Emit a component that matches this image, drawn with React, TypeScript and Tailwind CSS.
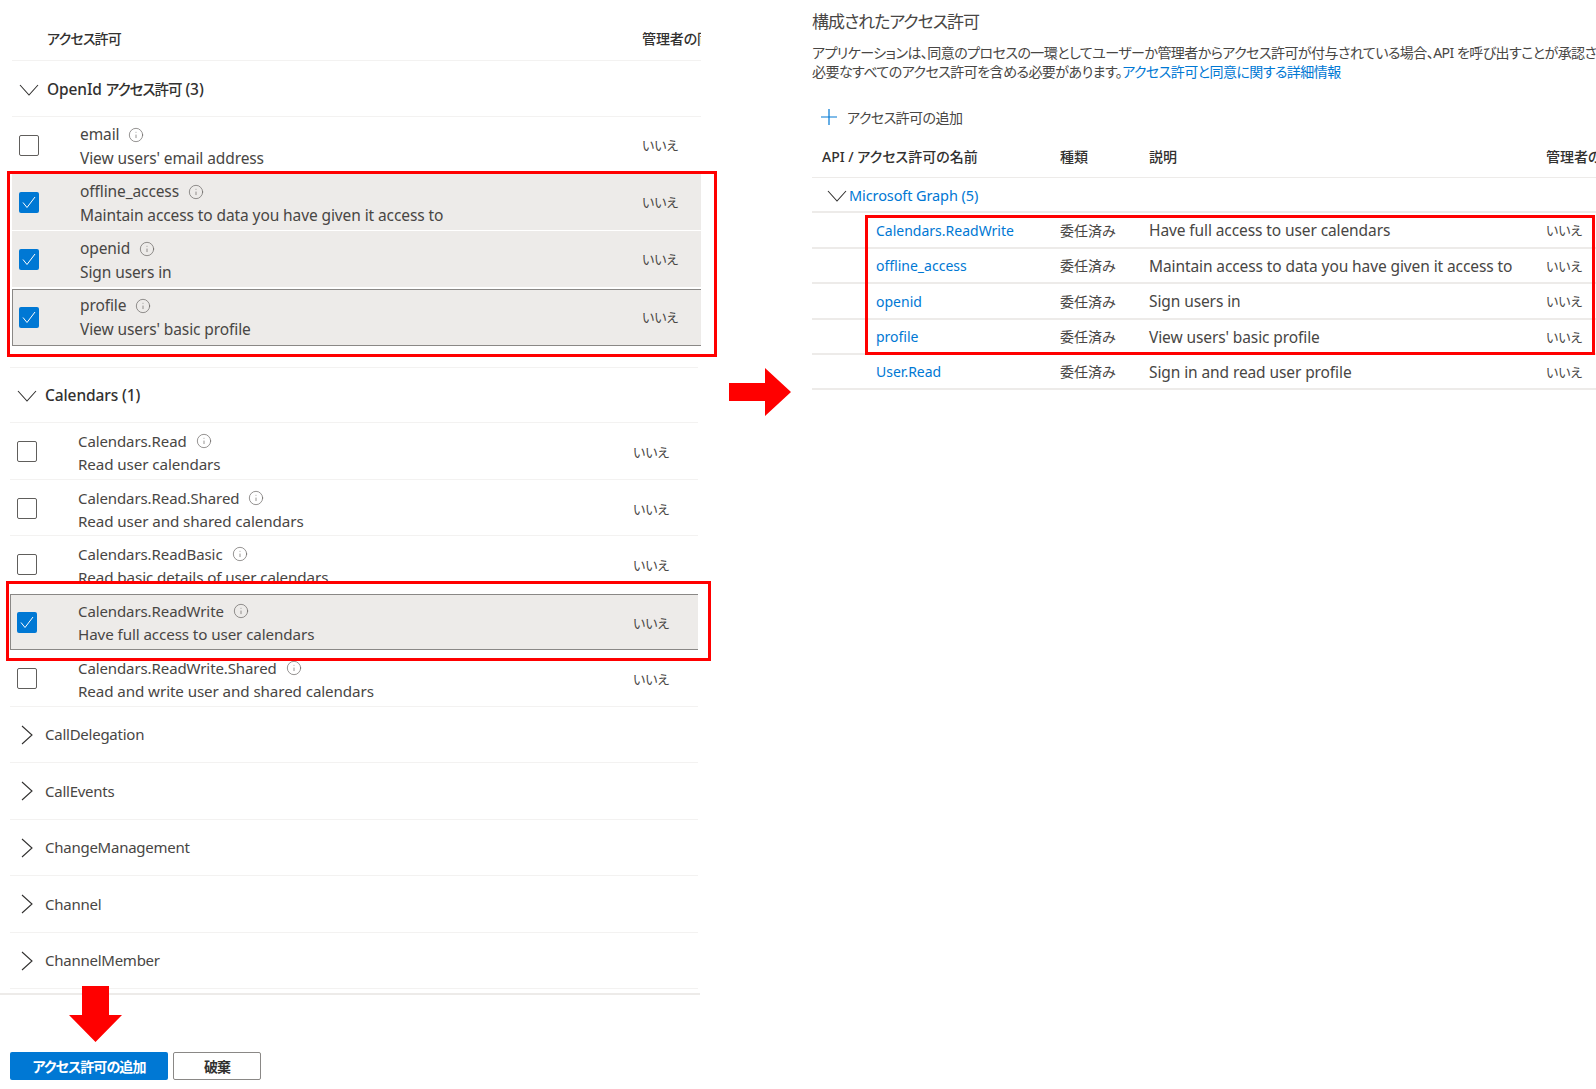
import type { ReactNode } from 'react';
import { Info } from 'lucide-react';

const Chevron = ({ open }: { open: boolean }) =>
  open ? (
    <svg width="20" height="12" viewBox="0 0 20 12" fill="none" stroke="#323130" strokeWidth="1.1">
      <path d="M1 1l9 10 9-10" />
    </svg>
  ) : (
    <svg width="12" height="20" viewBox="0 0 12 20" fill="none" stroke="#323130" strokeWidth="1.1">
      <path d="M1 1l10 9-10 9" />
    </svg>
  );

const Checkbox = ({ checked }: { checked?: boolean }) =>
  checked ? (
    <div className="flex h-[21px] w-[20px] items-center justify-center rounded-[2px] bg-[#0078d4]">
      <svg width="14" height="14" viewBox="0 0 14 14" fill="none" stroke="#fff" strokeWidth="1">
        <path d="M1 7.5l4 5L13 2" />
      </svg>
    </div>
  ) : (
    <div className="h-[21px] w-[20px] rounded-[2px] border border-[#605e5c] bg-white" />
  );

type RowProps = {
  label: string;
  desc: string;
  checked?: boolean;
  boxed?: boolean;
  lower?: boolean;
  rowClass: string;
};

// lower = the Calendars block, pasted from a slightly smaller capture than the OpenId block
const PermRow = ({ label, desc, checked, boxed, lower, rowClass }: RowProps) => (
  <div
    className={`grid overflow-hidden ${lower ? 'grid-cols-[68px_1fr_65px]' : 'grid-cols-[68px_1fr_59px]'} ${rowClass} ${checked ? 'bg-[#edebe9]' : 'border-b border-[#f3f2f1]'} ${boxed ? 'border-y border-l border-[#8a8886]' : ''}`}
  >
    <div className={`flex items-center ${boxed ? 'h-[54px] pl-[6px]' : 'h-[56px] pl-[7px]'}`}>
      <Checkbox checked={checked} />
    </div>
    <div className={`text-[#484644] ${boxed ? '-ml-px pt-[4px]' : 'pt-[6px]'} ${lower ? 'text-[15.2px]' : ''}`}>
      <div className={`flex h-[24px] items-center gap-[9px] ${lower ? 'text-[15px]' : 'text-[15.5px]'}`}>
        <span>{label}</span>
        <Info size={16} strokeWidth={1} className="text-[#605e5c]" />
      </div>
      <div className="h-[23px]">{desc}</div>
    </div>
    <div className={`flex items-center text-[13px] text-[#484644] ${boxed ? 'h-[54px]' : 'h-[56px]'} ${lower ? 'pt-[4px]' : 'pt-[2px]'}`}>いいえ</div>
  </div>
);

const GroupRow = ({ name, open, rowClass }: { name: ReactNode; open?: boolean; rowClass: string }) => (
  <div className={`flex items-center border-b border-[#f3f2f1] ${rowClass}`}>
    <div className="flex w-[35px] justify-center pr-[2px]">
      <Chevron open={!!open} />
    </div>
    <span className={open ? 'font-medium text-[#323130]' : 'text-[15px] tracking-[-0.25px] text-[#484644]'}>{name}</span>
  </div>
);

const configured = [
  { name: 'Calendars.ReadWrite', desc: 'Have full access to user calendars', rowClass: 'h-[36px]' },
  { name: 'offline_access', desc: 'Maintain access to data you have given it access to', rowClass: 'h-[35px]' },
  { name: 'openid', desc: 'Sign users in', rowClass: 'h-[36px]' },
  { name: 'profile', desc: "View users' basic profile", rowClass: 'h-[35px]' },
  { name: 'User.Read', desc: 'Sign in and read user profile', rowClass: 'h-[35px]' },
];

const tableCols = 'grid grid-cols-[64px_184px_89px_397px_1fr] items-center';

export default function App() {
  return (
    <div className="relative flex h-[1089px] w-[1596px] overflow-hidden bg-white font-['Noto_Sans','Noto_Sans_CJK_JP',sans-serif] text-[15.5px] tracking-[-0.1px] [font-feature-settings:'palt']">
      {/* request permissions panel */}
      <div className="flex w-[700px] shrink-0 flex-col">
        <div className="ml-[12px] w-[689px]">
          <div className="grid h-[61px] grid-cols-[35px_595px_59px] items-center overflow-hidden border-b border-[#f3f2f1] pt-[17px] text-[14px] font-medium whitespace-nowrap text-[#323130]">
            <span />
            <span className="tracking-[-0.8px]">アクセス許可</span>
            <span className="overflow-hidden">管理者の同意</span>
          </div>
          <GroupRow
            name={
              <>
                OpenId <span className="text-[14.5px] tracking-[-1px]">アクセス許可</span> (3)
              </>
            }
            open
            rowClass="h-[56px] pt-[2px]"
          />
          <PermRow label="email" desc="View users' email address" rowClass="h-[57px]" />
          <PermRow label="offline_access" desc="Maintain access to data you have given it access to" checked rowClass="h-[56px] mb-px" />
          <PermRow label="openid" desc="Sign users in" checked rowClass="h-[56px] mb-[2px]" />
          <PermRow label="profile" desc="View users' basic profile" checked boxed rowClass="h-[57px]" />
        </div>

        <div className="mt-[21px] ml-[10px] w-[688px] border-t border-[#f3f2f1]">
          <GroupRow name="Calendars (1)" open rowClass="h-[55px] pt-[2px]" />
          <PermRow lower label="Calendars.Read" desc="Read user calendars" rowClass="h-[57px]" />
          <PermRow lower label="Calendars.Read.Shared" desc="Read user and shared calendars" rowClass="h-[56px]" />
          <PermRow lower label="Calendars.ReadBasic" desc="Read basic details of user calendars" rowClass="h-[48px] mb-[10px] border-b-0" />
          <PermRow lower label="Calendars.ReadWrite" desc="Have full access to user calendars" checked boxed rowClass="h-[56px]" />
          <PermRow lower label="Calendars.ReadWrite.Shared" desc="Read and write user and shared calendars" rowClass="h-[57px]" />
          <GroupRow name="CallDelegation" rowClass="h-[56px]" />
          <GroupRow name="CallEvents" rowClass="h-[57px]" />
          <GroupRow name="ChangeManagement" rowClass="h-[56px]" />
          <GroupRow name="Channel" rowClass="h-[57px]" />
          <GroupRow name="ChannelMember" rowClass="h-[56px]" />
        </div>

        <div className="mt-[4px] border-t-2 border-[#edebe9]" />

        <div className="mt-[57px] flex gap-[5px] pl-[10px] text-[14px] font-bold tracking-[-0.9px]">
          <button className="h-[28px] w-[158px] rounded-[2px] bg-[#0078d4] text-white">アクセス許可の追加</button>
          <button className="h-[28px] w-[88px] rounded-[2px] border border-[#8a8886] bg-white text-[#323130]">破棄</button>
        </div>
      </div>

      {/* configured permissions panel */}
      <div className="ml-[112px] min-w-0 flex-1 overflow-hidden">
        <div className="flex h-[43px] items-center text-[17px] tracking-[-1px] text-[#484644]">構成されたアクセス許可</div>
        <div className="text-[14px] leading-[19px] tracking-[-0.55px] whitespace-nowrap text-[#484644]">
          <div>アプリケーションは、同意のプロセスの一環としてユーザーか管理者からアクセス許可が付与されている場合、API を呼び出すことが承認されます。</div>
          <div>
            必要なすべてのアクセス許可を含める必要があります。<span className="text-[#0078d4]">アクセス許可と同意に関する詳細情報</span>
          </div>
        </div>

        <div className="mt-[18px] flex h-[36px] items-center pl-[8px] text-[14px] tracking-[-0.55px] text-[#484644]">
          <svg width="18" height="18" viewBox="0 0 18 18" fill="none" stroke="#0078d4" strokeWidth="1.2">
            <path d="M9 1v16M1 9h16" />
          </svg>
          <span className="ml-[9px]">アクセス許可の追加</span>
        </div>

        <div className={`${tableCols} h-[43px] border-b border-[#edebe9] text-[14px] font-medium tracking-normal whitespace-nowrap text-[#323130]`}>
          <span className="col-span-2 pl-[10px]">API / アクセス許可の名前</span>
          <span>種類</span>
          <span>説明</span>
          <span>管理者の同意</span>
        </div>
        <div className="flex h-[35px] items-center border-b-2 border-[#edebe9] pt-[2px] pl-[15px] text-[14.5px] text-[#0078d4]">
          <svg width="20" height="12" viewBox="0 0 20 12" fill="none" stroke="#323130" strokeWidth="1.1">
            <path d="M1 1l9 10 9-10" />
          </svg>
          <span className="ml-[2px]">Microsoft Graph (5)</span>
        </div>
        {configured.map((row) => (
          <div key={row.name} className={`${tableCols} border-b-2 border-[#edebe9] whitespace-nowrap text-[#484644] ${row.rowClass}`}>
            <span />
            <span className="text-[14px] tracking-normal text-[#0078d4]">{row.name}</span>
            <span className="text-[14px] tracking-normal">委任済み</span>
            <span className="pt-[2px]">{row.desc}</span>
            <span className="pt-[2px] text-[13px]">いいえ</span>
          </div>
        ))}
      </div>

      {/* annotations over the screenshots */}
      <div className="pointer-events-none absolute top-[171px] left-[7px] h-[186px] w-[710px] border-[3px] border-[#ff0000]" />
      <div className="pointer-events-none absolute top-[581px] left-[6px] h-[80px] w-[705px] border-[3px] border-[#ff0000]" />
      <div className="pointer-events-none absolute top-[215px] left-[865px] h-[140px] w-[730px] border-[3px] border-[#ff0000]" />

      <svg className="absolute top-[368px] left-[729px]" width="62" height="48" viewBox="0 0 62 48" fill="#ff0000">
        <path d="M0 15h36V0l26 24-26 24V33H0z" />
      </svg>
      <svg className="absolute top-[986px] left-[69px]" width="53" height="56" viewBox="0 0 53 56" fill="#ff0000">
        <path d="M13 0h27v29h13L26.5 56 0 29h13z" />
      </svg>
    </div>
  );
}
